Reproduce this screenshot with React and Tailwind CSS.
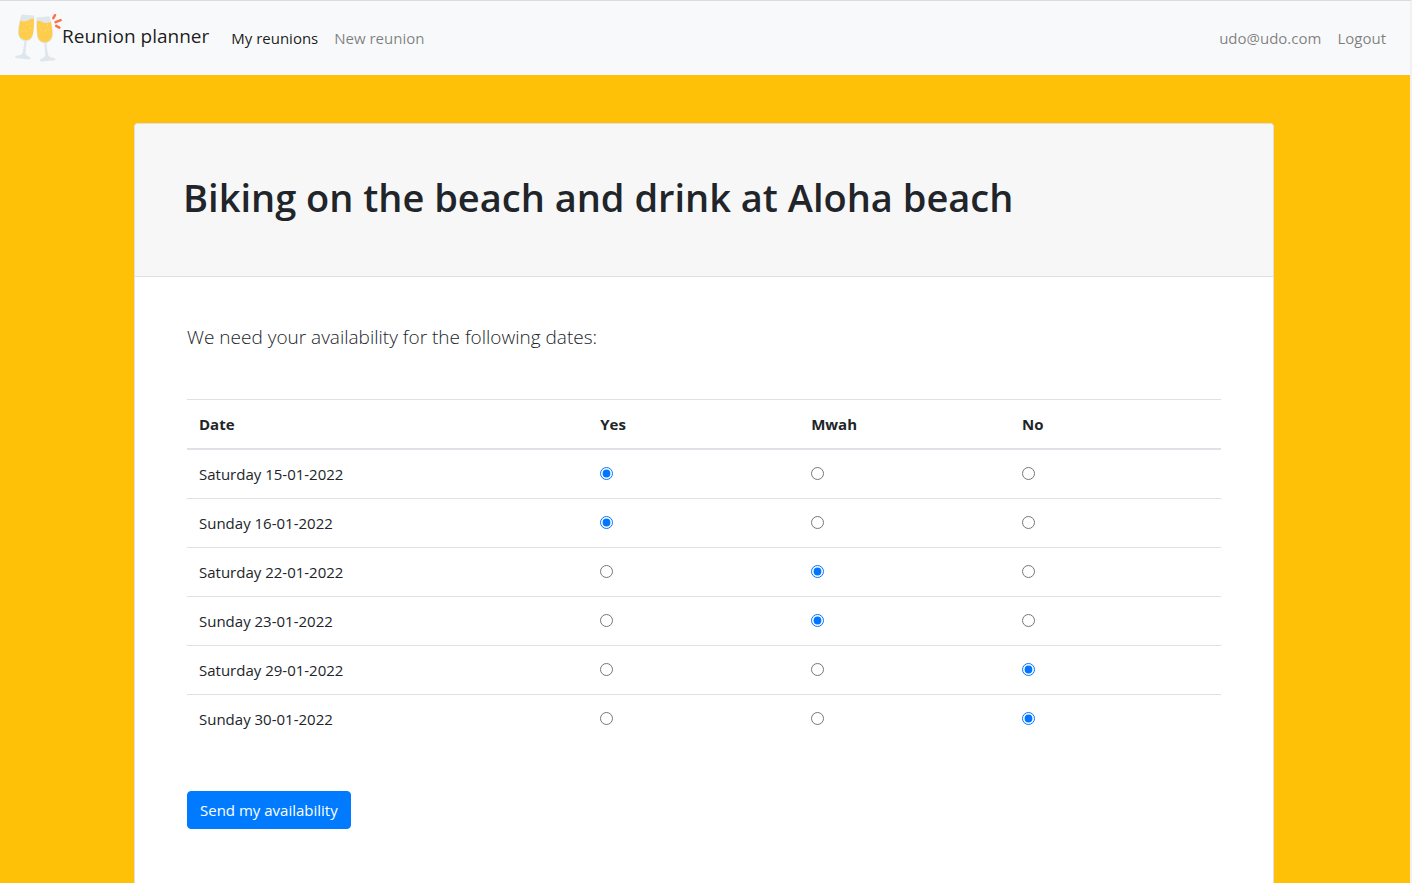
import { useState } from 'react';

const OPTIONS = ['Yes', 'Mwah', 'No'];

const DATES = [
  { label: 'Saturday 15-01-2022', answer: 'Yes' },
  { label: 'Sunday 16-01-2022', answer: 'Yes' },
  { label: 'Saturday 22-01-2022', answer: 'Mwah' },
  { label: 'Sunday 23-01-2022', answer: 'Mwah' },
  { label: 'Saturday 29-01-2022', answer: 'No' },
  { label: 'Sunday 30-01-2022', answer: 'No' },
];

function GlassesLogo() {
  return (
    <svg viewBox="14 13 48 50" className="h-[50px] w-12 shrink-0" aria-hidden="true">
      <g fill="#e0e7ec">
        <path d="M21.6 14.6 L34.2 15.6 C34.4 22 34.2 28 33.3 34 C32.6 38.4 29.6 40.9 26.8 41.3 C26.2 45.5 25.6 50 25.6 53.6 C25.6 55.6 30.4 56.6 30.6 58.4 C30.7 59.5 28.6 59.5 26.5 59.2 L17.5 58.2 C15.4 58 14.6 57.5 15 56.6 C15.8 55 21.6 55.6 22.3 53.4 C23.4 49.6 23.9 45.4 24.4 41.1 C20.8 40.3 17.8 37 18 31.8 C18.3 26 19.6 20 21.6 14.6 Z" />
        <path d="M36.6 17.4 L49.4 16.2 C51.4 22 52.6 27.6 52.9 33.6 C53 38.6 50.6 42 46.6 43.2 C46.9 47.4 47.4 51.6 48.4 55.4 C49.2 57.8 54.8 57.2 55.4 59 C55.8 60.2 54 60.4 52.4 60.6 L42.6 61.4 C41 61.5 39.6 61.4 39.8 60.3 C40.2 58.4 45 57.8 45.1 55.6 C45.1 51.6 44.7 47.4 44.2 43.3 C40.4 42.8 37.4 40 37 36 C36.3 29.8 36.1 23.6 36.6 17.4 Z" />
      </g>
      <g fill="#ffcd4c">
        <path d="M20.2 20.4 C23.2 22 26.6 21.6 29 20 C30.6 18.9 32.2 18.5 33.9 18.5 C34 24 33.8 29 32.9 33.4 C32.2 37.6 29 40.2 25.4 40.1 C21.4 39.8 18.5 36.6 18.7 32 C18.9 28 19.4 24 20.2 20.4 Z" />
        <path d="M36.9 21.2 C39.4 20.6 41.4 21.4 43.4 22.4 C45.8 23.4 48.4 23 50.8 21.8 C51.8 26 52.2 29.8 52.3 33.6 C52.4 38.4 49.6 41.8 45.6 42.3 C41.6 42.6 38.2 39.8 37.6 35.8 C37 31 36.8 26 36.9 21.2 Z" />
      </g>
      <g fill="#ffdb7a">
        {[[23.4, 26.6], [27.2, 24.4], [30.4, 24], [26, 30.8], [30.2, 28.2], [22.2, 31], [39.6, 25.4], [43.2, 26.6], [47.4, 25.2], [40.8, 29.6], [45.4, 31.2], [48.4, 29.4]].map(
          ([cx, cy]) => (
            <circle key={`${cx}-${cy}`} cx={cx} cy={cy} r="0.7" />
          ),
        )}
      </g>
      <g stroke="#ff7145" strokeWidth="2.5" strokeLinecap="round">
        <path d="M53.3 18.1 L55 15.2" />
        <path d="M55.6 22.1 L60.7 20.2" />
        <path d="M56.2 25.9 L59.3 27.7" />
      </g>
    </svg>
  );
}

export default function App() {
  const [answers, setAnswers] = useState(() => DATES.map((d) => d.answer));

  const choose = (row, option) =>
    setAnswers((current) => current.map((a, i) => (i === row ? option : a)));

  return (
    <div className="flex min-h-screen flex-col border-t border-r-2 border-t-[#dadbdd] border-r-[#f1f1f1] bg-[#ffc107] font-['Open_Sans','Noto_Sans',sans-serif] text-[15px] leading-6 text-[#212529]">
      <nav className="flex h-[74px] items-center bg-[#f8f9fa] pr-6 pl-[14px]">
        <a href="#home" className="flex items-center text-[19px] leading-[30px] text-black/90">
          <GlassesLogo />
          <span className="pb-1">Reunion planner</span>
        </a>
        <div className="ml-[22px] flex gap-4">
          <a href="#reunions" className="text-black/90">My reunions</a>
          <a href="#new" className="text-black/50">New reunion</a>
        </div>
        <div className="ml-auto flex gap-4">
          <a href="#account" className="text-black/50">udo@udo.com</a>
          <a href="#logout" className="text-black/50">Logout</a>
        </div>
      </nav>

      <main className="flex grow flex-col pt-12 pr-[2px]">
        <section className="mx-auto w-full max-w-[1140px] grow rounded-t border border-b-0 border-[#dfdfdf] bg-white">
          <header className="rounded-t border-b border-[#dfdfdf] bg-[#f7f7f7] px-12 pt-12 pb-[54px]">
            <h1 className="text-[38px] leading-[50px] font-semibold">
              Biking on the beach and drink at Aloha beach
            </h1>
          </header>
          <form className="px-[52px] py-12" onSubmit={(e) => e.preventDefault()}>
            <p className="mb-[50px] text-[19px] leading-6 font-light">
              We need your availability for the following dates:
            </p>
            <table className="w-full table-fixed border-separate border-spacing-0 text-left">
              <thead>
                <tr>
                  <th scope="col" className="w-[38.8%] border-t border-b-2 border-[#dee2e6] p-3 font-bold">Date</th>
                  {OPTIONS.map((option) => (
                    <th key={option} scope="col" className="border-t border-b-2 border-[#dee2e6] p-3 font-bold">
                      {option}
                    </th>
                  ))}
                </tr>
              </thead>
              <tbody>
                {DATES.map((date, row) => (
                  <tr key={date.label} className="group align-top">
                    <td className="border-t border-[#dee2e6] p-3 group-first:border-t-0">{date.label}</td>
                    {OPTIONS.map((option) => (
                      <td key={option} className="border-t border-[#dee2e6] p-3 group-first:border-t-0">
                        <input
                          type="radio"
                          name={`date-${row}`}
                          aria-label={`${date.label}: ${option}`}
                          checked={answers[row] === option}
                          onChange={() => choose(row, option)}
                          className="my-[5px] block size-[13px] accent-[#0075ff]"
                        />
                      </td>
                    ))}
                  </tr>
                ))}
              </tbody>
            </table>
            <button type="submit" className="mt-12 rounded border border-[#007bff] bg-[#007bff] px-3 py-1.5 text-white">
              Send my availability
            </button>
          </form>
        </section>
      </main>
    </div>
  );
}
